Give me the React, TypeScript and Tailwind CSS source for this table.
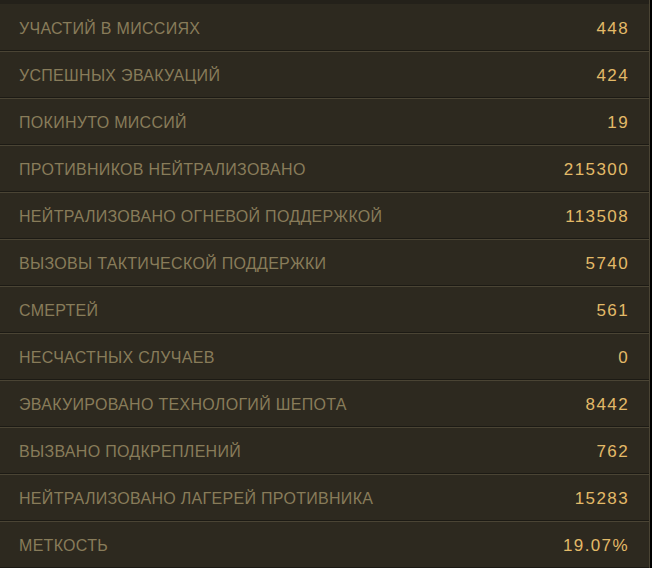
const stats: [string, string][] = [
  ["УЧАСТИЙ В МИССИЯХ", "448"],
  ["УСПЕШНЫХ ЭВАКУАЦИЙ", "424"],
  ["ПОКИНУТО МИССИЙ", "19"],
  ["ПРОТИВНИКОВ НЕЙТРАЛИЗОВАНО", "215300"],
  ["НЕЙТРАЛИЗОВАНО ОГНЕВОЙ ПОДДЕРЖКОЙ", "113508"],
  ["ВЫЗОВЫ ТАКТИЧЕСКОЙ ПОДДЕРЖКИ", "5740"],
  ["СМЕРТЕЙ", "561"],
  ["НЕСЧАСТНЫХ СЛУЧАЕВ", "0"],
  ["ЭВАКУИРОВАНО ТЕХНОЛОГИЙ ШЕПОТА", "8442"],
  ["ВЫЗВАНО ПОДКРЕПЛЕНИЙ", "762"],
  ["НЕЙТРАЛИЗОВАНО ЛАГЕРЕЙ ПРОТИВНИКА", "15283"],
  ["МЕТКОСТЬ", "19.07%"],
];

export default function App() {
  return (
    <div className="w-[652px] h-[568px] overflow-hidden bg-black flex">
      <div className="w-[650px] h-full bg-[#2d291f] border-r border-[#4a4434] flex flex-col font-['Liberation_Sans',sans-serif]">
        {/* top strip */}
        <div className="h-[4px] shrink-0 bg-[#24211a]" />
        {stats.map(([label, value], i) => (
          <div
            key={i}
            className="h-[47px] shrink-0 flex items-center justify-between pt-[4px] pl-[19px] pr-[20px] border-b border-[#1c1a14] shadow-[0_1px_0_#4a4434]"
          >
            <span className="text-[16px] text-[#887c5a] tracking-[0.3px]">{label}</span>
            <span className="text-[17px] text-[#e3ba68] tracking-[1.4px]">{value}</span>
          </div>
        ))}
      </div>
    </div>
  );
}
